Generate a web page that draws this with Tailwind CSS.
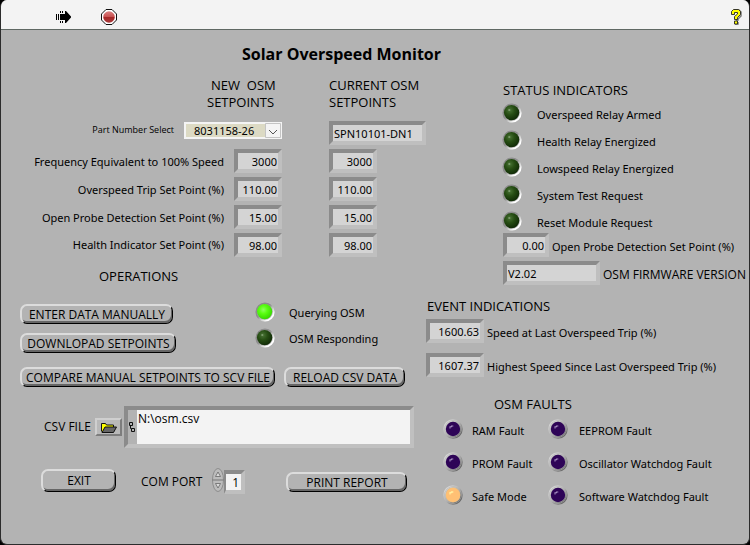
<!DOCTYPE html>
<html lang="en">
<head>
<meta charset="utf-8">
<title>Solar Overspeed Monitor</title>
<script src="https://cdn.jsdelivr.net/npm/@tailwindcss/browser@4"></script>
</head>
<body class="min-h-screen flex bg-black font-['Noto_Sans','Open_Sans',sans-serif] text-[11px] leading-5 text-black">
<svg class="absolute size-0" aria-hidden="true">
  <defs>
    <radialGradient id="gDark" cx=".38" cy=".34" r=".68"><stop offset="0" stop-color="#4a7436"/><stop offset=".45" stop-color="#274e14"/><stop offset="1" stop-color="#102a06"/></radialGradient>
    <radialGradient id="gLit" cx=".42" cy=".38" r=".65"><stop offset="0" stop-color="#8dff62"/><stop offset=".4" stop-color="#5aff12"/><stop offset="1" stop-color="#35d400"/></radialGradient>
    <linearGradient id="ring" x1="0" y1="0" x2="1" y2="1"><stop offset="0" stop-color="#8a8a8a"/><stop offset=".45" stop-color="#8e8e8e"/><stop offset=".6" stop-color="#c4c4c4"/><stop offset=".8" stop-color="#ffffff"/></linearGradient>
    <linearGradient id="bevel" x1="0" y1="0" x2="1" y2="1"><stop offset="0" stop-color="#e4e4e4"/><stop offset=".5" stop-color="#b0b0b0"/><stop offset="1" stop-color="#4a4a4a"/></linearGradient>
    <linearGradient id="stop" x1="0" y1="0" x2="0" y2="1"><stop offset="0" stop-color="#dc8080"/><stop offset=".5" stop-color="#c85050"/><stop offset=".5" stop-color="#a82626"/><stop offset="1" stop-color="#a83a3a"/></linearGradient>
  </defs>
  <symbol id="led-off" viewBox="0 0 20 20"><circle cx="10" cy="10" r="8.7" fill="none" stroke="url(#ring)" stroke-width="1.8"/><circle cx="9.6" cy="9.6" r="7.7" fill="url(#gDark)"/><circle cx="7.3" cy="7" r="1.1" fill="#8aa87c" opacity=".8"/></symbol>
  <symbol id="led-on" viewBox="0 0 20 20"><circle cx="10" cy="10" r="8.7" fill="none" stroke="url(#ring)" stroke-width="1.8"/><circle cx="9.6" cy="9.6" r="7.6" fill="url(#gLit)"/></symbol>
  <symbol id="fault-off" viewBox="0 0 20 20"><circle cx="10" cy="10" r="9.2" fill="none" stroke="url(#bevel)" stroke-width="1.1"/><circle cx="10" cy="10" r="7.9" fill="#b0b0b0" stroke="url(#bevel)" stroke-width=".8"/><circle cx="10" cy="10" r="7.2" fill="#2e0457"/><path d="M7 9.500V7.700H8.500V7H10.300" fill="none" stroke="#a58fc0" stroke-width="1.100"/></symbol>
  <symbol id="fault-on" viewBox="0 0 20 20"><circle cx="10" cy="10" r="9.2" fill="none" stroke="url(#bevel)" stroke-width="1.1"/><circle cx="10" cy="10" r="7.9" fill="#d0b890" stroke="url(#bevel)" stroke-width=".8"/><circle cx="10" cy="10" r="7.2" fill="#ffc074"/><path d="M7 9.500V7.700H8.500V7H10.300" fill="none" stroke="#fff0a0" stroke-width="1.300"/></symbol>
</svg>

<div class="flex-1 min-w-0 flex flex-col rounded-[7px] overflow-hidden border border-[#2c2c2c] border-t-0 bg-[#b3b3b3]">
  <header class="h-[30px] flex items-center bg-[#f3f3f3] border-b border-[#5f6863] pt-[5px] pl-[55px] pr-[7px]">
    <button aria-label="Run" class="mr-[29px]">
      <svg class="block w-4 h-[14px]" viewBox="0 0 16 14"><path d="M0 4h1v6H0zM2 4h1v6H2zM4 4h5V1h1l5 5.500v1L10 13H9v-3H4zM4 1h1v2H4zM6 1h1v2H6zM4 11h1v2H4zM6 11h1v2H6z"/></svg>
    </button>
    <button aria-label="Abort">
      <svg class="block size-4" viewBox="0 0 16 16"><path d="M5 .5h6L15.500 5v6L11 15.500H5L.5 11V5z" fill="#fff" stroke="#111"/><circle cx="8" cy="8" r="5.800" fill="url(#stop)"/></svg>
    </button>
    <button aria-label="Help" class="ml-auto">
      <svg class="block w-[11px] h-4" viewBox="0 0 11 16"><path d="M3 1h5l2 2v4L7 10v1H5M4 15h3v-2" fill="none" stroke="#777" stroke-width="1.500"/><path d="M.5 2.500L2.500.5h5l2 2v3L6.500 8.500v2h-3v-3L6.500 5V3.500h-3v2h-3zM3.500 12h3v3h-3z" fill="#ffff00" stroke="#222" stroke-width=".9"/></svg>
    </button>
  </header>

  <main>
    <h1 class="h-10 pt-[14px] pr-[67px] text-center text-[16px] font-bold font-['Open_Sans','Noto_Sans',sans-serif]">Solar Overspeed Monitor</h1>
    <div class="grid grid-cols-[25fr_19fr]">
      <div class="min-w-0">
        <section class="flex flex-col gap-1 pt-[7px]">
          <div class="flex justify-end pb-[6px] font-['Open_Sans','Noto_Sans',sans-serif] text-[13px] leading-[17px]">
            <h2 class="w-[122px]"><span class="block pl-1">NEW&nbsp; OSM</span>SETPOINTS</h2>
            <h2 class="w-[97px]">CURRENT OSM<br>SETPOINTS</h2>
          </div>
          <div class="flex items-center h-6">
            <label for="part" class="flex-1 pr-[10px] pb-[6px] text-right font-['Open_Sans','Noto_Sans',sans-serif] text-[9px] whitespace-nowrap">Part Number Select</label>
            <div class="relative w-[98px] mr-[47px] -mt-[5px]">
              <select id="part" class="block w-full h-[17px] appearance-none rounded-none border-2 border-[#f4f4f4] bg-[#dcdac4] pl-2 leading-[13px]"><option>8031158-26</option></select>
              <svg class="absolute right-px top-px w-4 h-[15px] pointer-events-none" viewBox="0 0 16 15"><path d="M.5.5h15v14H.5z" fill="#f4f4f4" stroke="#c4c4c4"/><path d="M4 7l4 4 4-4" fill="none" stroke="#555"/></svg>
            </div>
            <input aria-label="Current part number" readonly value="SPN10101-DN1" class="w-[97px] h-6 border-4 border-t-[#8b8b8b] border-l-[#8b8b8b] border-b-[#bfbfbf] border-r-[#bfbfbf] bg-[#d4d4d4] px-px">
          </div>
          <div class="flex items-center h-6">
            <label for="freq" class="flex-1 pt-[2px] pr-[10px] text-right whitespace-nowrap">Frequency Equivalent to 100% Speed</label>
            <input id="freq" value="3000" class="w-12 mr-[47px] h-6 border-4 border-t-[#8b8b8b] border-l-[#8b8b8b] border-b-[#bfbfbf] border-r-[#bfbfbf] bg-[#d4d4d4] pr-px text-right">
            <div class="w-[97px]"><input aria-label="Current frequency" readonly value="3000" class="block w-12 h-6 border-4 border-t-[#8b8b8b] border-l-[#8b8b8b] border-b-[#bfbfbf] border-r-[#bfbfbf] bg-[#d4d4d4] pr-px text-right"></div>
          </div>
          <div class="flex items-center h-6">
            <label for="trip" class="flex-1 pt-[2px] pr-[10px] text-right whitespace-nowrap">Overspeed Trip Set Point (%)</label>
            <input id="trip" value="110.00" class="w-12 mr-[47px] h-6 border-4 border-t-[#8b8b8b] border-l-[#8b8b8b] border-b-[#bfbfbf] border-r-[#bfbfbf] bg-[#d4d4d4] pr-px text-right">
            <div class="w-[97px]"><input aria-label="Current trip set point" readonly value="110.00" class="block w-12 h-6 border-4 border-t-[#8b8b8b] border-l-[#8b8b8b] border-b-[#bfbfbf] border-r-[#bfbfbf] bg-[#d4d4d4] pr-px text-right"></div>
          </div>
          <div class="flex items-center h-6">
            <label for="probe" class="flex-1 pt-[2px] pr-[10px] text-right whitespace-nowrap">Open Probe Detection Set Point (%)</label>
            <input id="probe" value="15.00" class="w-12 mr-[47px] h-6 border-4 border-t-[#8b8b8b] border-l-[#8b8b8b] border-b-[#bfbfbf] border-r-[#bfbfbf] bg-[#d4d4d4] pr-px text-right">
            <div class="w-[97px]"><input aria-label="Current open probe set point" readonly value="15.00" class="block w-12 h-6 border-4 border-t-[#8b8b8b] border-l-[#8b8b8b] border-b-[#bfbfbf] border-r-[#bfbfbf] bg-[#d4d4d4] pr-px text-right"></div>
          </div>
          <div class="flex items-center h-6">
            <label for="health" class="flex-1 pr-[10px] text-right whitespace-nowrap">Health Indicator Set Point (%)</label>
            <input id="health" value="98.00" class="w-12 mr-[47px] h-6 border-4 border-t-[#8b8b8b] border-l-[#8b8b8b] border-b-[#bfbfbf] border-r-[#bfbfbf] bg-[#d4d4d4] pr-px text-right">
            <div class="w-[97px]"><input aria-label="Current health set point" readonly value="98.00" class="block w-12 h-6 border-4 border-t-[#8b8b8b] border-l-[#8b8b8b] border-b-[#bfbfbf] border-r-[#bfbfbf] bg-[#d4d4d4] pr-px text-right"></div>
          </div>
        </section>

        <section class="pt-[10px] font-['Open_Sans','Noto_Sans',sans-serif] text-[12px]">
          <h2 class="pl-[98px] text-[13px] leading-[18px]">OPERATIONS</h2>
          <div class="flex pt-[17px] pl-[19px]">
            <div class="w-[235px] flex flex-col items-start gap-[9px] pt-[2px]">
              <button class="h-5 w-[153px] rounded-[7px] border-t-2 border-l-2 border-b border-r border-t-[#dcdcdc] border-l-[#dcdcdc] border-b-black border-r-black shadow-[inset_-1px_-2px_0_#666] leading-4 whitespace-nowrap">ENTER DATA MANUALLY</button>
              <button class="h-5 w-[156px] rounded-[7px] border-t-2 border-l-2 border-b border-r border-t-[#dcdcdc] border-l-[#dcdcdc] border-b-black border-r-black shadow-[inset_-1px_-2px_0_#666] leading-4 whitespace-nowrap">DOWNLOPAD SETPOINTS</button>
            </div>
            <ul class="flex flex-col gap-[6px] font-['Noto_Sans','Open_Sans',sans-serif] text-[11px]">
              <li class="flex items-center h-5 gap-[14px]"><svg class="size-5"><use href="#led-on"/></svg><span class="pt-[2px]">Querying OSM</span></li>
              <li class="flex items-center h-5 gap-[14px]"><svg class="size-5"><use href="#led-off"/></svg><span class="pt-[2px]">OSM Responding</span></li>
            </ul>
          </div>
          <div class="flex gap-[9px] pt-[14px] pl-[19px]">
            <button class="h-5 w-[255px] rounded-[7px] border-t-2 border-l-2 border-b border-r border-t-[#dcdcdc] border-l-[#dcdcdc] border-b-black border-r-black shadow-[inset_-1px_-2px_0_#666] leading-4 whitespace-nowrap">COMPARE MANUAL SETPOINTS TO SCV FILE</button>
            <button class="h-5 w-[121px] rounded-[7px] border-t-2 border-l-2 border-b border-r border-t-[#dcdcdc] border-l-[#dcdcdc] border-b-black border-r-black shadow-[inset_-1px_-2px_0_#666] leading-4 whitespace-nowrap">RELOAD CSV DATA</button>
          </div>
          <div class="flex items-center pt-[19px] pl-[43px] pr-3">
            <label for="csv" class="w-[51px] whitespace-nowrap">CSV FILE</label>
            <button aria-label="Browse" class="mr-[2px] w-[27px] h-[18px] flex items-center justify-center border-2 border-t-[#cfcfcf] border-l-[#cfcfcf] border-b-[#7d7d7d] border-r-[#7d7d7d] bg-[#b9b9b9]">
              <svg class="block w-4 h-[11px]" viewBox="0 0 16 11"><path d="M.5 9.500V1.500h4l1 1.500h7v2" fill="#ffff00" stroke="#111"/><path d="M1 10.500L4 5h11.500L12.500 10.500z" fill="#666" stroke="#111"/></svg>
            </button>
            <div class="flex-1 min-w-0 flex h-[42px] border-4 border-t-[#8b8b8b] border-l-[#8b8b8b] border-b-[#c0c0c0] border-r-[#c0c0c0]">
              <svg class="shrink-0 w-[9px] h-[34px]" viewBox="0 0 9 34"><path d="M1.500 12.500h3v3h-3zM3.500 18.500h3v3h-3zM2.500 15.500v3h1" fill="none" stroke="#111"/></svg>
              <textarea id="csv" class="block flex-1 min-w-0 resize-none overflow-hidden bg-[#f3f3f3] pl-px leading-[18px]">N:\osm.csv</textarea>
            </div>
          </div>
          <div class="flex items-center pt-[22px] pl-10">
            <button class="h-[23px] w-[75px] mr-[25px] -mt-1 rounded-[7px] border-t-2 border-l-2 border-b border-r border-t-[#dcdcdc] border-l-[#dcdcdc] border-b-black border-r-black shadow-[inset_-1px_-2px_0_#666] leading-4">EXIT</button>
            <label for="port" class="w-[71px] whitespace-nowrap">COM PORT</label>
            <svg class="w-3 h-6 -mt-1" viewBox="0 0 12 24"><ellipse cx="6" cy="12" rx="5.500" ry="11.500" fill="#bcbcbc" stroke="#8c8c8c"/><path d="M.5 12h11" stroke="#777"/><path d="M3.500 8.500L6 4l2.500 4.500zM3.500 15.500L6 20l2.500-4.500z" fill="#ddd" stroke="#666" stroke-width=".8"/></svg>
            <input id="port" value="1" class="w-[21px] h-6 mr-[41px] border-t-4 border-r-4 border-b-4 border-l-2 border-t-[#8b8b8b] border-l-[#8b8b8b] border-b-[#bfbfbf] border-r-[#bfbfbf] bg-[#f3f3f3] pr-[2px] text-right">
            <button class="h-5 w-[121px] rounded-[7px] border-t-2 border-l-2 border-b border-r border-t-[#dcdcdc] border-l-[#dcdcdc] border-b-black border-r-black shadow-[inset_-1px_-2px_0_#666] leading-4 whitespace-nowrap">PRINT REPORT</button>
          </div>
        </section>
      </div>

      <div class="min-w-0">
        <section class="pt-[10px] pl-[77px]">
          <h2 class="font-['Open_Sans','Noto_Sans',sans-serif] text-[13px]">STATUS INDICATORS</h2>
          <ul class="flex flex-col gap-[7px] pt-[3px]">
            <li class="flex items-center h-5 gap-[15px]"><svg class="size-5 -ml-px"><use href="#led-off"/></svg><span class="pt-[3px]">Overspeed Relay Armed</span></li>
            <li class="flex items-center h-5 gap-[15px]"><svg class="size-5 -ml-px"><use href="#led-off"/></svg><span class="pt-[3px]">Health Relay Energized</span></li>
            <li class="flex items-center h-5 gap-[15px]"><svg class="size-5 -ml-px"><use href="#led-off"/></svg><span class="pt-[3px]">Lowspeed Relay Energized</span></li>
            <li class="flex items-center h-5 gap-[15px]"><svg class="size-5 -ml-px"><use href="#led-off"/></svg><span class="pt-[3px]">System Test Request</span></li>
            <li class="flex items-center h-5 gap-[15px]"><svg class="size-5 -ml-px"><use href="#led-off"/></svg><span class="pt-[3px]">Reset Module Request</span></li>
          </ul>
          <div class="flex items-center gap-[3px] pt-[2px]">
            <input id="open" readonly value="0.00" class="w-[46px] h-6 border-4 border-t-[#8b8b8b] border-l-[#8b8b8b] border-b-[#bfbfbf] border-r-[#bfbfbf] bg-[#d4d4d4] pr-px text-right">
            <label for="open" class="pt-1 whitespace-nowrap">Open Probe Detection Set Point (%)</label>
          </div>
          <div class="flex items-center gap-[3px] pt-1">
            <input id="fw" readonly value="V2.02" class="w-[97px] h-6 border-4 border-t-[#8b8b8b] border-l-[#8b8b8b] border-b-[#bfbfbf] border-r-[#bfbfbf] bg-[#d4d4d4] px-px">
            <label for="fw" class="pt-[3px] font-['Open_Sans','Noto_Sans',sans-serif] text-[12px] whitespace-nowrap">OSM FIRMWARE VERSION</label>
          </div>
        </section>
        <section class="pt-[11px]">
          <h2 class="pl-px font-['Open_Sans','Noto_Sans',sans-serif] text-[13px]">EVENT INDICATIONS</h2>
          <div class="flex items-center gap-[3px] pt-[3px]">
            <input id="last" readonly value="1600.63" class="w-[58px] h-6 border-4 border-t-[#8b8b8b] border-l-[#8b8b8b] border-b-[#bfbfbf] border-r-[#bfbfbf] bg-[#d4d4d4] pr-px text-right">
            <label for="last" class="pt-[3px] whitespace-nowrap">Speed at Last Overspeed Trip (%)</label>
          </div>
          <div class="flex items-center gap-[3px] pt-[10px]">
            <input id="high" readonly value="1607.37" class="w-[58px] h-6 border-4 border-t-[#8b8b8b] border-l-[#8b8b8b] border-b-[#bfbfbf] border-r-[#bfbfbf] bg-[#d4d4d4] pr-px text-right">
            <label for="high" class="pt-[3px] whitespace-nowrap">Highest Speed Since Last Overspeed Trip (%)</label>
          </div>
        </section>
        <section class="pt-[17px] pl-[17px]">
          <h2 class="pl-[51px] font-['Open_Sans','Noto_Sans',sans-serif] text-[13px]">OSM FAULTS</h2>
          <ul class="grid grid-cols-[105px_1fr] gap-y-[13px] pt-[5px] whitespace-nowrap">
            <li class="flex items-center h-5 gap-[9px]"><svg class="size-5"><use href="#fault-off"/></svg><span class="pt-[3px]">RAM Fault</span></li>
            <li class="flex items-center h-5 gap-[11px]"><svg class="size-5"><use href="#fault-off"/></svg><span class="pt-[3px]">EEPROM Fault</span></li>
            <li class="flex items-center h-5 gap-[9px]"><svg class="size-5"><use href="#fault-off"/></svg><span class="pt-[3px]">PROM Fault</span></li>
            <li class="flex items-center h-5 gap-[11px]"><svg class="size-5"><use href="#fault-off"/></svg><span class="pt-[3px]">Oscillator Watchdog Fault</span></li>
            <li class="flex items-center h-5 gap-[9px]"><svg class="size-5"><use href="#fault-on"/></svg><span class="pt-[3px]">Safe Mode</span></li>
            <li class="flex items-center h-5 gap-[11px]"><svg class="size-5"><use href="#fault-off"/></svg><span class="pt-[3px]">Software Watchdog Fault</span></li>
          </ul>
        </section>
      </div>
    </div>
  </main>
</div>
</body>
</html>
